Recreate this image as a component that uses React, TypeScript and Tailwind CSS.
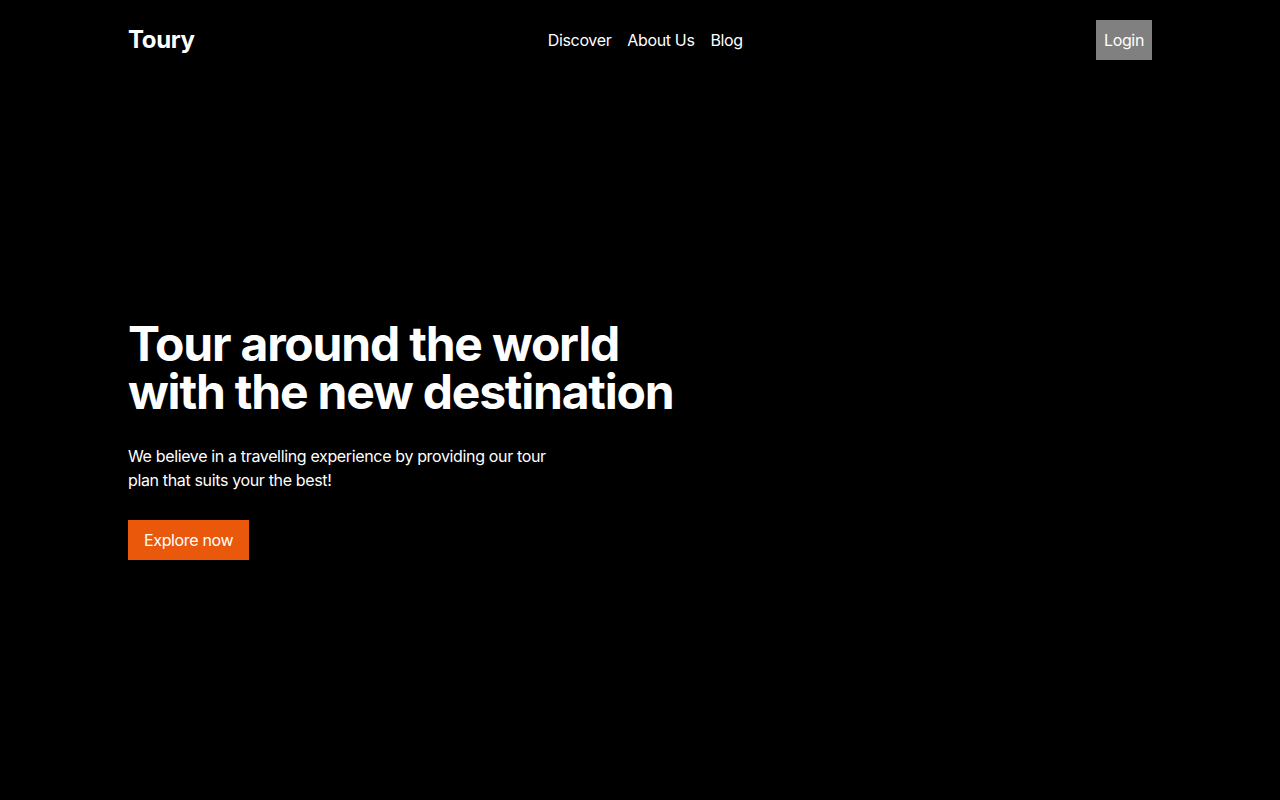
export default function App() {
  return (
    <div className="flex h-screen flex-col bg-black text-white tracking-[-0.022em]" style={{ fontFamily: 'Inter, "Noto Sans", sans-serif' }}>
      <header className="mx-auto flex h-20 w-full max-w-5xl items-center justify-between">
        <div className="text-2xl font-bold">Toury</div>
        <nav className="flex gap-4 text-base">
          <a href="#">Discover</a>
          <a href="#">About Us</a>
          <a href="#">Blog</a>
        </nav>
        <button className="h-10 bg-[#808080] px-2 text-base text-white">Login</button>
      </header>
      <main className="mx-auto flex w-full max-w-5xl flex-1 items-center">
        <div>
          <h1 className="max-w-xl text-5xl font-bold leading-none tracking-tight">Tour around the world with the new destination</h1>
          <p className="mt-7 max-w-md text-base leading-6">We believe in a travelling experience by providing our tour plan that suits your the best!</p>
          <button className="mt-7 h-10 bg-[#ea580c] px-4 text-base text-white">Explore now</button>
        </div>
      </main>
    </div>
  );
}
